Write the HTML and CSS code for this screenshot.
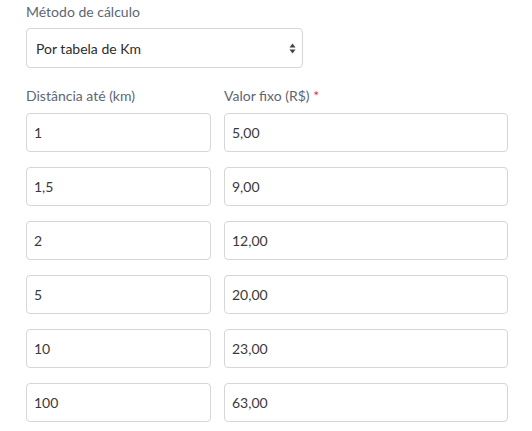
FILE: index.html
```html
<!DOCTYPE html>
<html lang="pt-BR">
<head>
<meta charset="utf-8">
<title>Método de cálculo</title>
<link rel="stylesheet" href="styles.css">
</head>
<body>
<div class="form">
  <label class="label">Método de cálculo</label>
  <div class="select">
    <span>Por tabela de Km</span>
    <svg class="arrows" width="7" height="11" viewBox="0 0 7 11"><path d="M3.5 0.5 L6.5 4.5 L0.5 4.5 Z M3.5 10.5 L6.5 6.5 L0.5 6.5 Z" fill="#444"/></svg>
  </div>
  <div class="grid">
    <label class="label">Distância até (km)</label>
    <label class="label">Valor fixo (R$) <span class="req">*</span></label>
    <div class="input">1</div><div class="input">5,00</div>
    <div class="input">1,5</div><div class="input">9,00</div>
    <div class="input">2</div><div class="input">12,00</div>
    <div class="input">5</div><div class="input">20,00</div>
    <div class="input">10</div><div class="input">23,00</div>
    <div class="input">100</div><div class="input">63,00</div>
  </div>
</div>
</body>
</html>
```
FILE: styles.css
```css
html, body { margin: 0; padding: 0; background: #fff; }
body { font-family: Lato, "Open Sans", sans-serif; font-size: 14px; color: #333; }
.form { padding: 2px 0 0 26px; width: 482px; }
.label { display: block; color: #5d6673; font-size: 14px; line-height: 20px; margin-bottom: 6px; }
.req { color: #e0343a; }
.select {
  width: 277px; height: 40px; box-sizing: border-box;
  border: 1px solid #d6d6d6; border-radius: 4px;
  display: flex; align-items: center; justify-content: space-between;
  padding: 0 6px 0 9px; color: #2d2d2d; margin-bottom: 18px;
}
.arrows { display: block; }
.grid { display: grid; grid-template-columns: 185px 284px; column-gap: 13px; row-gap: 15px; }
.grid .label { margin-bottom: -8px; }
.input {
  height: 39px; box-sizing: border-box; border: 1px solid #d6d6d6; border-radius: 4px;
  display: flex; align-items: center; padding-left: 7px; color: #3a3a3a;
}
```
